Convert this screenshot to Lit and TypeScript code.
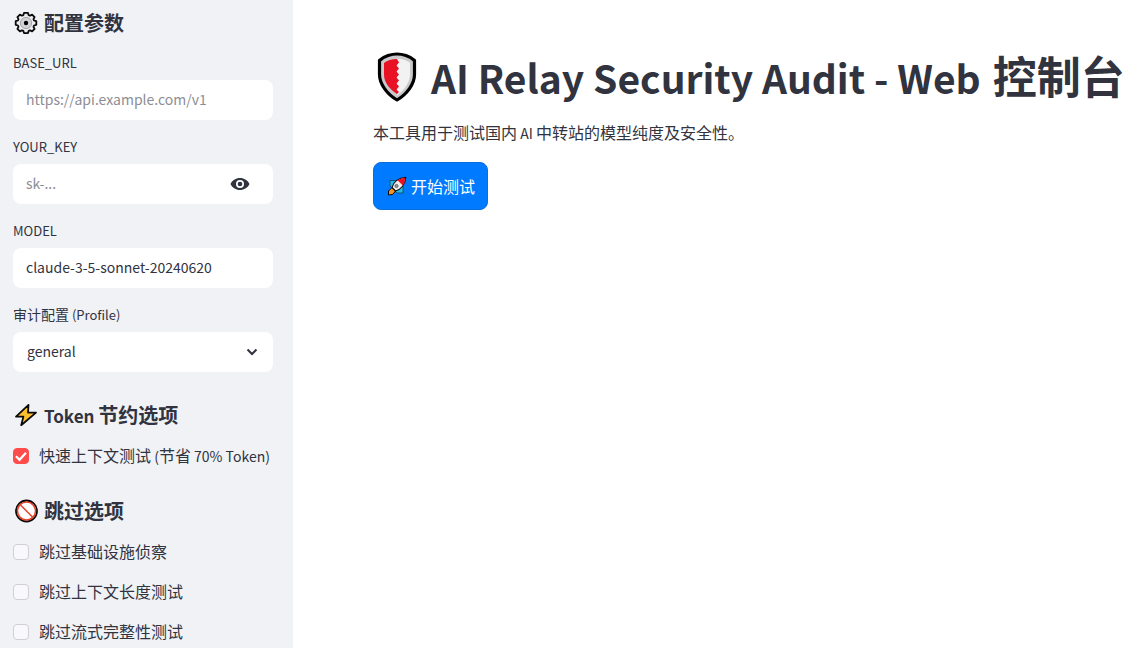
import { LitElement, html, css, svg } from "lit";
import { customElement, state } from "lit/decorators.js";

const gearIcon = html`<svg class="icon" viewBox="0 0 24 24" aria-hidden="true">
  <path d="M10 1.900h4l.7 2.300 1.300.5 2.100-1.100 2.500 2.500-1.100 2.100.5 1.300 2.300.7v3.600l-2.300.7-.5 1.300 1.100 2.100-2.500 2.500-2.100-1.100-1.300.5-.7 2.300h-4l-.7-2.300-1.300-.5-2.100 1.100-2.500-2.500 1.100-2.100-.5-1.300-2.300-.7v-3.600l2.300-.7.5-1.300-1.100-2.100 2.500-2.500L8 4.700l1.300-.5z"
    fill="#ececee" stroke="#0a0a0a" stroke-width="1.800" stroke-linejoin="round" />
  <circle cx="12" cy="12" r="5.600" fill="#d3d3d5" stroke="#a4a4a7" stroke-width="1" />
  <circle cx="12" cy="12" r="2.200" fill="#000" />
</svg>`;

const boltIcon = html`<svg class="icon" viewBox="0 0 24 24" aria-hidden="true">
  <path d="M14.500 1.800 2 13.600h7.400L7.200 22.200 22 9.600h-8z"
    fill="#fcc02e" stroke="#0a0a0a" stroke-width="1.800" stroke-linejoin="round" />
</svg>`;

const prohibitedIcon = html`<svg class="icon" viewBox="0 0 24 24" aria-hidden="true">
  <circle cx="12.500" cy="12" r="10.500" fill="#fff" stroke="#0a0a0a" stroke-width="1.800" />
  <circle cx="12.500" cy="12" r="9" fill="#fff" stroke="#e8432a" stroke-width="1.500" />
  <path d="m6.300 5.800 12.400 12.400" stroke="#e8432a" stroke-width="1.500" />
</svg>`;

const shieldIcon = html`<svg class="shield" viewBox="0 0 40 50" aria-hidden="true">
  <path d="M20 2C15 2 7 4 2.500 8.500v14C2.500 32 10 42 20 48c10-6 17.500-16 17.500-25.500v-14C33 4 25 2 20 2z"
    fill="#c9c9cb" stroke="#000" stroke-width="3.200" stroke-linejoin="round" />
  <path d="M20 6.800c5 0 9.800 1.500 13 4v12c0 7-5 15-13 20.500z" fill="#f2f2f2" />
  <path d="M20 7C15 7 10 8.500 7 11v11.500c0 8 5.500 14.500 13 19.500l2-2-2.500-2.500 2.500-3-2.500-3 2.500-3-2.500-3 2.500-3-2.500-3 2.500-3-2.500-3 2.500-3z"
    fill="#e81224" />
</svg>`;

const rocketIcon = html`<svg class="rocket" viewBox="0 0 20 20" aria-hidden="true">
  <path d="M3 4.500h7l6 6v6.500H10L3 10z" fill="#26b9e0" stroke="#0b3f63" stroke-width=".8" stroke-linejoin="round" />
  <path d="M5 11.500 1.500 15v4l4-.5 3.500-4z" fill="#f7921e" stroke="#06080c" stroke-width="1" stroke-linejoin="round" />
  <path d="M5 11.500C6.500 6 11.500 1.500 18.800 1.200 18.500 8.500 14 13.500 8.500 15z"
    fill="#f0f0f0" stroke="#06080c" stroke-width="1.100" stroke-linejoin="round" />
  <path d="M10.500 4.300c2.300-1.600 5.200-2.500 7.800-2.600 0 2.700-.9 5.500-2.500 7.700z" fill="#e81224" />
  <circle cx="9.500" cy="10" r="1.700" fill="#8c9299" stroke="#50545a" stroke-width=".6" />
</svg>`;

const eyeIcon = html`<svg class="eye" viewBox="0 0 20 14" aria-hidden="true">
  <path fill-rule="evenodd" fill="currentColor"
    d="M10 1C5.800 1 2.100 3.400.5 7c1.600 3.600 5.300 6 9.500 6s7.900-2.400 9.500-6C17.900 3.400 14.200 1 10 1zm0 10a4 4 0 1 1 0-8 4 4 0 0 1 0 8z" />
  <circle cx="10" cy="7" r="2.300" fill="currentColor" />
</svg>`;

const chevronIcon = html`<svg class="chevron" viewBox="0 0 12 8" aria-hidden="true">
  <path d="m1.500 1.500 4.500 4.500 4.500-4.500" fill="none" stroke="currentColor" stroke-width="2" />
</svg>`;

interface Option {
  id: string;
  label: string;
  checked: boolean;
}

@customElement("app-root")
export class AppRoot extends LitElement {
  @state() private keyVisible = false;

  @state() private skips: Option[] = [
    { id: "skip-infra", label: "跳过基础设施侦察", checked: false },
    { id: "skip-context", label: "跳过上下文长度测试", checked: false },
    { id: "skip-stream", label: "跳过流式完整性测试", checked: false },
  ];

  static styles = css`
    :host {
      display: grid;
      grid-template-columns: 293px minmax(0, 1fr);
      height: 100vh;
      overflow: hidden;
      background: #fff;
      color: #31333f;
      font-family: "Noto Sans CJK SC", sans-serif;
      font-size: 16px;
      line-height: 24px;
    }
    * {
      box-sizing: border-box;
    }
    svg {
      display: block;
      flex: none;
    }
    .sidebar {
      display: flex;
      flex-direction: column;
      gap: 16px;
      padding: 0 20px 0 13px;
      background: #f0f2f6;
      overflow: hidden;
    }
    .sidebar > * {
      flex: none;
    }
    h2 {
      display: flex;
      align-items: center;
      gap: 6px;
      margin: 0;
      padding: 15px 0 1px 1px;
      font-size: 20px;
      line-height: 24px;
      font-weight: 700;
    }
    h2:first-child {
      padding-top: 11px;
    }
    .icon {
      width: 24px;
      height: 24px;
    }
    .latin {
      font-size: 14px;
      line-height: 1;
    }
    h2 .latin {
      font-size: 17px;
    }
    h1 .latin {
      font-size: 39px;
    }
    .field {
      display: flex;
      flex-direction: column;
      gap: 8px;
    }
    .field label {
      font-size: 14px;
      line-height: 20px;
    }
    .field label .latin {
      font-size: 13px;
    }
    .box {
      display: flex;
      align-items: center;
      height: 40px;
      border-radius: 8px;
      background: #fff;
    }
    .box input,
    .box select {
      flex: 1;
      min-width: 0;
      height: 40px;
      margin: 0;
      padding: 0 13px 2px;
      border: 0;
      border-radius: 8px;
      outline: none;
      background: transparent;
      color: inherit;
      font: inherit;
      font-size: 14px;
      appearance: none;
    }
    .box select {
      grid-area: 1 / 1;
      padding: 0 36px 2px 14px;
    }
    .box.choice {
      display: grid;
    }
    .box.choice .chevron {
      grid-area: 1 / 1;
      justify-self: end;
      margin-right: 15px;
      pointer-events: none;
    }
    input::placeholder {
      color: #8d8e95;
      opacity: 1;
    }
    .reveal {
      display: flex;
      margin: 0 23px 0 0;
      padding: 0;
      border: 0;
      background: none;
      color: inherit;
      cursor: pointer;
    }
    .eye {
      width: 20px;
      height: 14px;
    }
    .chevron {
      width: 12px;
      height: 8px;
    }
    .check {
      display: flex;
      align-items: center;
      gap: 10px;
      white-space: nowrap;
      cursor: pointer;
    }
    .text {
      padding-bottom: 2px;
      line-height: 22px;
    }
    .tick {
      display: grid;
      width: 16px;
      height: 16px;
    }
    .tick input,
    .tick svg {
      grid-area: 1 / 1;
      width: 16px;
      height: 16px;
      margin: 0;
    }
    .tick input {
      appearance: none;
      border: 1px solid #cfd0d5;
      border-radius: 4px;
      background: #f9f9fb;
    }
    .tick input:checked {
      border-color: #ff4b4b;
      background: #ff4b4b;
    }
    .tick svg {
      visibility: hidden;
      pointer-events: none;
    }
    .tick input:checked + svg {
      visibility: visible;
    }
    main {
      display: flex;
      flex-direction: column;
      align-items: flex-start;
      gap: 16px;
      padding: 52px 0 0 80px;
      white-space: nowrap;
      overflow: hidden;
    }
    h1 {
      display: flex;
      align-items: flex-start;
      gap: 14px;
      margin: 0;
      padding: 0 0 2px 4px;
      font-size: 44px;
      line-height: 46px;
      font-weight: 700;
    }
    .title {
      display: flex;
      align-items: baseline;
      gap: 12px;
    }
    .shield {
      width: 40px;
      height: 50px;
    }
    p {
      margin: 0;
    }
    .start {
      display: flex;
      align-items: center;
      gap: 4px;
      height: 48px;
      padding: 0 12px 0 13px;
      margin-top: 2px;
      border: 1px solid #0a6fdc;
      border-radius: 8px;
      background: #007bff;
      color: #fff;
      font: inherit;
      cursor: pointer;
    }
    .rocket {
      width: 20px;
      height: 20px;
    }
  `;

  private tick(id: string, checked: boolean) {
    return html`<span class="tick">
      <input type="checkbox" id=${id} .checked=${checked} />
      <svg viewBox="0 0 16 16" aria-hidden="true">
        ${svg`<path d="m3 8.300 3.500 3.500L13 4.800" fill="none" stroke="#fff" stroke-width="2.200" />`}
      </svg>
    </span>`;
  }

  render() {
    return html`
      <aside class="sidebar">
        <h2>${gearIcon}<span>配置参数</span></h2>
        <div class="field">
          <label for="base-url"><span class="latin">BASE_URL</span></label>
          <div class="box"><input id="base-url" type="text" placeholder="https://api.example.com/v1" /></div>
        </div>
        <div class="field">
          <label for="key"><span class="latin">YOUR_KEY</span></label>
          <div class="box">
            <input id="key" type=${this.keyVisible ? "text" : "password"} placeholder="sk-..." />
            <button
              class="reveal"
              type="button"
              aria-label="Show password"
              @click=${() => (this.keyVisible = !this.keyVisible)}
            >${eyeIcon}</button>
          </div>
        </div>
        <div class="field">
          <label for="model"><span class="latin">MODEL</span></label>
          <div class="box"><input id="model" type="text" value="claude-3-5-sonnet-20240620" /></div>
        </div>
        <div class="field">
          <label for="profile">审计配置<span class="latin"> (Profile)</span></label>
          <div class="box choice">
            <select id="profile"><option>general</option></select>
            ${chevronIcon}
          </div>
        </div>
        <h2>${boltIcon}<span><span class="latin">Token </span>节约选项</span></h2>
        <label class="check" for="fast">
          ${this.tick("fast", true)}
          <span class="text">快速上下文测试<span class="latin"> (</span>节省<span class="latin"> 70% Token)</span></span>
        </label>
        <h2>${prohibitedIcon}<span>跳过选项</span></h2>
        ${this.skips.map(
          (o) => html`<label class="check" for=${o.id}>${this.tick(o.id, o.checked)}<span class="text">${o.label}</span></label>`
        )}
      </aside>
      <main>
        <h1>${shieldIcon}<span class="title"><span class="latin">AI Relay Security Audit - Web</span> <span>控制台</span></span></h1>
        <p>本工具用于测试国内<span class="latin"> AI </span>中转站的模型纯度及安全性。</p>
        <button class="start" type="button">${rocketIcon}<span>开始测试</span></button>
      </main>
    `;
  }
}
